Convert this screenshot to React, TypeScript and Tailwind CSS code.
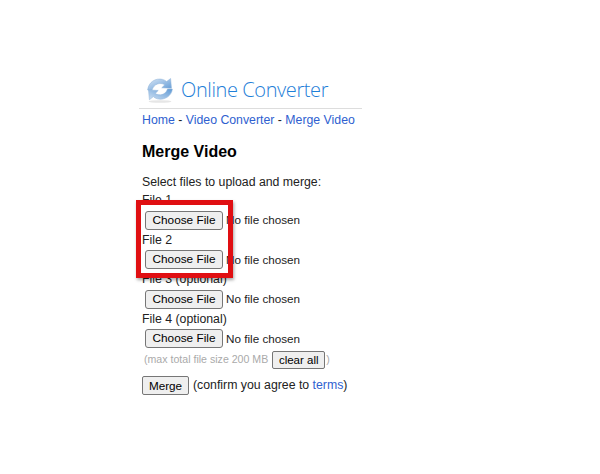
function FileRow({ label }: { label: string }) {
  return (
    <>
      <div className="h-[19.75px] leading-[19.75px]">{label}</div>
      <div className="flex h-[19.75px] items-center pb-[1px] pl-[3px]">
        <button className="h-[19px] w-[78px] shrink-0 rounded-[3px] border border-[#767676] bg-[#efefef] text-center text-[11.8px] leading-[17px] text-black">
          Choose File
        </button>
        <span className="ml-[3px] text-[11.7px]">No file chosen</span>
      </div>
    </>
  );
}

function Logo() {
  return (
    <svg width="30" height="28" viewBox="0 0 34 30" className="mt-[2px] shrink-0">
      <defs>
        <linearGradient id="a" x1="0" y1="0" x2="1" y2="1">
          <stop offset="0" stopColor="#dbe7f5" />
          <stop offset="1" stopColor="#5f9ad6" />
        </linearGradient>
        <linearGradient id="b" x1="0" y1="1" x2="1" y2="0">
          <stop offset="0" stopColor="#cfe0f2" />
          <stop offset="1" stopColor="#5f9ad6" />
        </linearGradient>
      </defs>
      <ellipse cx="17" cy="28" rx="13" ry="1.500" fill="#e6e6e6" />
      <path d="M3 15C4 6 12 1 20 3c2 .6 3.500 1.500 4.500 2.500L29 2l1 11-11-.5 3.500-3.500C17 6 10 8 8 15Z" fill="url(#a)" stroke="#8fb3d9" strokeWidth=".6" />
      <path d="M31 14c-1 8-9 13-17 11-2-.5-3.500-1.400-4.500-2.500L5 26 4 15l11 .5-3.500 3.500c5 3 12 1.500 14-5Z" fill="url(#b)" stroke="#8fb3d9" strokeWidth=".6" />
    </svg>
  );
}

export default function App() {
  return (
    <div className="relative h-[474px] w-[600px] overflow-hidden bg-white font-['Liberation_Sans',Arial,sans-serif] text-[12.3px] text-[#222]">
      <div className="ml-[139px] w-[223px] pt-[74px]">
        <div className="flex h-[35px] items-start gap-[6px] border-b border-[#dddddd] pl-[6px]">
          <Logo />
          <span className="font-['Open_Sans',sans-serif] text-[20px] font-light leading-[31px] tracking-[-0.4px] text-[#1f80d8]">Online Converter</span>
        </div>
        <div className="pl-[3px]">
          <div className="mt-[3px] h-[16px] leading-[16px] text-[#222]">
            <a className="text-[#2f5fd0]">Home</a> - <a className="text-[#2f5fd0]">Video Converter</a> -{" "}
            <a className="text-[#2f5fd0]">Merge Video</a>
          </div>
          <h1 className="mt-[14px] h-[20px] text-[16px] font-bold leading-[20px] text-black">Merge Video</h1>
          <div className="mt-[11px] h-[18px] leading-[18px]">Select files to upload and merge:</div>
          <div>
            <FileRow label="File 1" />
            <FileRow label="File 2" />
            <FileRow label="File 3 (optional)" />
            <FileRow label="File 4 (optional)" />
          </div>
          <div className="flex h-[22px] items-center whitespace-nowrap pl-[2px] text-[10.6px] text-[#aaaaaa]">
            <span>(max total file size 200 MB</span>
            <button className="ml-[4px] h-[18px] w-[53px] rounded-[2px] border border-[#767676] bg-[#efefef] text-[11.5px] leading-[16px] text-black">
              clear all
            </button>
            <span className="ml-[1px]">)</span>
          </div>
          <div className="mt-[5px] flex h-[19px] items-center whitespace-nowrap">
            <button className="h-[19px] w-[47px] rounded-[2px] border border-[#767676] bg-[#efefef] text-[11.7px] leading-[17px] text-black">
              Merge
            </button>
            <span className="ml-[4px]">
              (confirm you agree to <a className="text-[#2f5fd0]">terms</a>)
            </span>
          </div>
        </div>
      </div>
      <div className="absolute left-[136px] top-[200px] h-[78px] w-[97px] border-[5px] border-[#e00f12] shadow-[1px_2px_3px_rgba(0,0,0,0.35)]" />
    </div>
  );
}
